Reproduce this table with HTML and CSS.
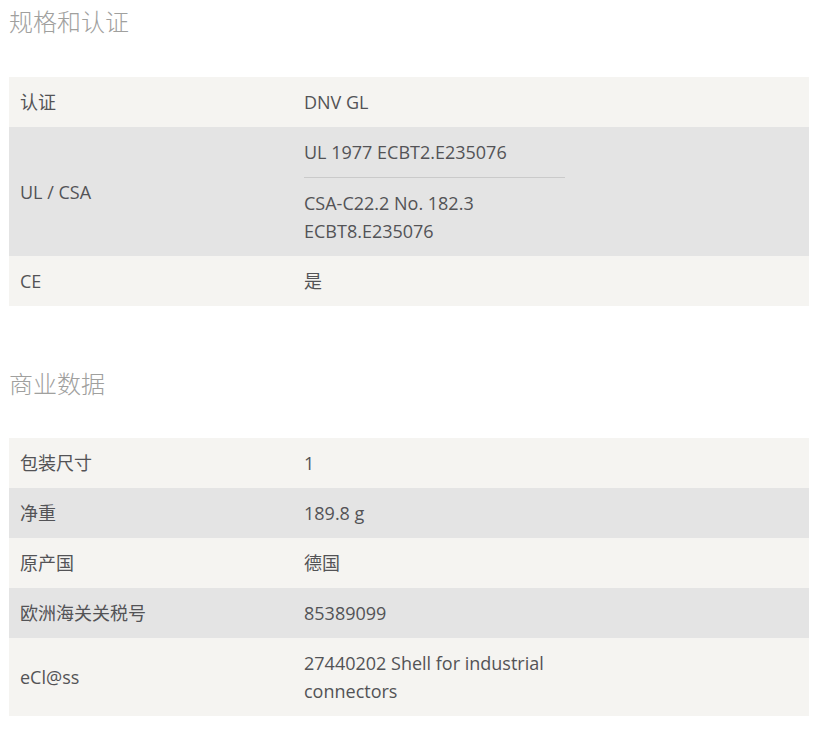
FILE: index.html
```html
<!DOCTYPE html>
<html lang="zh">
<head>
<meta charset="utf-8">
<link rel="stylesheet" href="styles.css">
</head>
<body>
<div class="page">
  <h2 class="section-title">规格和认证</h2>
  <div class="spec-table">
    <div class="row light">
      <div class="label">认证</div>
      <div class="value"><div class="sub">DNV GL</div></div>
    </div>
    <div class="row grey">
      <div class="label">UL / CSA</div>
      <div class="value">
        <div class="sub">UL 1977 ECBT2.E235076</div>
        <div class="sub sep">CSA-C22.2 No. 182.3 ECBT8.E235076</div>
      </div>
    </div>
    <div class="row light">
      <div class="label">CE</div>
      <div class="value"><div class="sub">是</div></div>
    </div>
  </div>

  <h2 class="section-title second">商业数据</h2>
  <div class="spec-table">
    <div class="row light">
      <div class="label">包装尺寸</div>
      <div class="value"><div class="sub">1</div></div>
    </div>
    <div class="row grey">
      <div class="label">净重</div>
      <div class="value"><div class="sub">189.8 g</div></div>
    </div>
    <div class="row light">
      <div class="label">原产国</div>
      <div class="value"><div class="sub">德国</div></div>
    </div>
    <div class="row grey">
      <div class="label">欧洲海关关税号</div>
      <div class="value"><div class="sub">85389099</div></div>
    </div>
    <div class="row light">
      <div class="label">eCl@ss</div>
      <div class="value"><div class="sub">27440202 Shell for industrial connectors</div></div>
    </div>
  </div>
</div>
</body>
</html>
```
FILE: styles.css
```css
html, body {
  margin: 0;
  padding: 0;
  background: #ffffff;
}
.page {
  padding: 0 11px 0 9px;
  font-family: "Open Sans", "Noto Sans CJK SC", sans-serif;
  color: #535356;
}
.section-title {
  margin: 0 0 33px 0;
  font-size: 24px;
  line-height: 44px;
  font-weight: 300;
  color: #a0a09e;
}
.section-title.second {
  margin-top: 56px;
  margin-bottom: 32px;
}
.spec-table {
  display: flex;
  flex-direction: column;
}
.row {
  display: grid;
  grid-template-columns: 295px 261px 1fr;
  align-items: center;
  font-size: 18px;
  line-height: 28px;
}
.row.light { background: #f5f4f1; }
.row.grey { background: #e4e4e4; }
.label {
  padding: 11px 11px;
}
.value {
  display: flex;
  flex-direction: column;
}
.sub {
  padding: 11px 0;
}
.sub.sep {
  border-top: 1px solid #cacaca;
}
```
